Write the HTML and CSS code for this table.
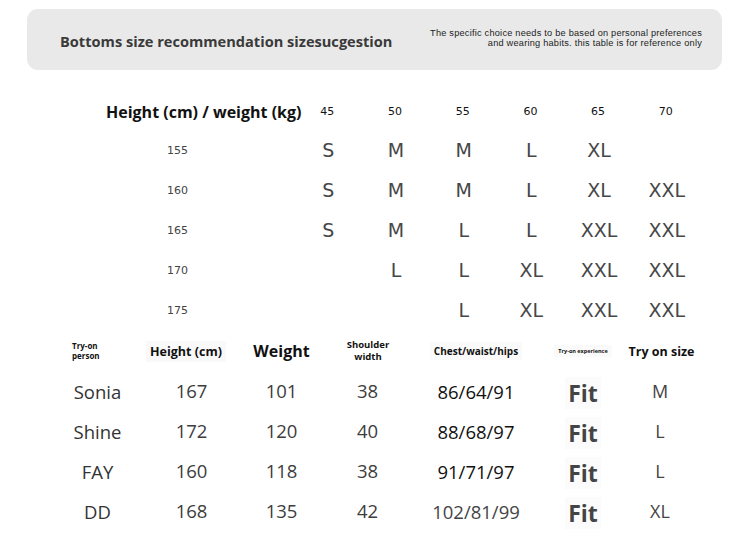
FILE: index.html
```html
<!DOCTYPE html>
<html>
<head>
<meta charset="utf-8">
<link rel="stylesheet" href="styles.css">
</head>
<body>
<div class="page">
  <header class="banner">
    <h1 class="banner-title">Bottoms size recommendation sizesucgestion</h1>
    <p class="banner-note"><span>The specific choice needs to be based on personal preferences</span><span>and wearing habits. this table is for reference only</span></p>
  </header>

  <section class="size-chart">
    <div class="corner">Height (cm) / weight (kg)</div>
    <div class="wt">45</div><div class="wt">50</div><div class="wt">55</div><div class="wt">60</div><div class="wt">65</div><div class="wt">70</div>

    <div class="ht">155</div>
    <div class="sz">S</div><div class="sz">M</div><div class="sz">M</div><div class="sz">L</div><div class="sz">XL</div><div class="sz"></div>

    <div class="ht">160</div>
    <div class="sz">S</div><div class="sz">M</div><div class="sz">M</div><div class="sz">L</div><div class="sz">XL</div><div class="sz">XXL</div>

    <div class="ht">165</div>
    <div class="sz">S</div><div class="sz">M</div><div class="sz">L</div><div class="sz">L</div><div class="sz">XXL</div><div class="sz">XXL</div>

    <div class="ht">170</div>
    <div class="sz"></div><div class="sz">L</div><div class="sz">L</div><div class="sz">XL</div><div class="sz">XXL</div><div class="sz">XXL</div>

    <div class="ht">175</div>
    <div class="sz"></div><div class="sz"></div><div class="sz">L</div><div class="sz">XL</div><div class="sz">XXL</div><div class="sz">XXL</div>
  </section>

  <section class="tryon">
    <div class="th th-person"><span>Try-on<br>person</span></div>
    <div class="th th-height"><span>Height (cm)</span></div>
    <div class="th th-weight"><span>Weight</span></div>
    <div class="th th-shoulder"><span>Shoulder<br>width</span></div>
    <div class="th th-chest"><span>Chest/waist/hips</span></div>
    <div class="th th-exp"><span>Try-on experience</span></div>
    <div class="th th-size"><span>Try on size</span></div>

    <div class="td name">Sonia</div><div class="td num">167</div><div class="td num">101</div><div class="td num">38</div><div class="td bust">86/64/91</div><div class="td fit"><span>Fit</span></div><div class="td size">M</div>
    <div class="td name">Shine</div><div class="td num">172</div><div class="td num">120</div><div class="td num">40</div><div class="td bust">88/68/97</div><div class="td fit"><span>Fit</span></div><div class="td size">L</div>
    <div class="td name">FAY</div><div class="td num">160</div><div class="td num">118</div><div class="td num">38</div><div class="td bust">91/71/97</div><div class="td fit"><span>Fit</span></div><div class="td size">L</div>
    <div class="td name">DD</div><div class="td num">168</div><div class="td num">135</div><div class="td num">42</div><div class="td bust grey">102/81/99</div><div class="td fit"><span>Fit</span></div><div class="td size">XL</div>
  </section>
</div>
</body>
</html>
```

FILE: styles.css
```css
* { box-sizing: border-box; }
html, body { margin: 0; padding: 0; background: #fff; }
body { font-family: "Open Sans", "Noto Sans", sans-serif; color: #333; }

.page { width: 750px; height: 535px; overflow: hidden; padding-top: 9px; }

.banner {
  margin-left: 27px;
  width: 695px;
  height: 61px;
  background: #e9e9e9;
  border-radius: 11px;
  display: flex;
  align-items: center;
  justify-content: space-between;
  padding: 0 20px 0 33px;
}
.banner-title {
  margin: 0;
  font-size: 14.6px;
  font-weight: 700;
  color: #3a3a3a;
  padding-top: 2px;
}
.banner-note {
  margin: 0;
  display: flex;
  flex-direction: column;
  align-items: flex-end;
  font-family: "Liberation Sans", sans-serif;
  font-size: 9.2px;
  letter-spacing: 0.23px;
  text-align: right;
  color: #222;
  padding-bottom: 4px;
}
.banner-note span { display: block; height: 10px; line-height: 10px; }

.size-chart {
  margin-top: 24px;
  margin-left: 106px;
  display: grid;
  grid-template-columns: 187.5px repeat(6, 67.7px);
  grid-template-rows: 36px repeat(5, 40px);
  align-items: center;
}
.corner {
  font-size: 16px;
  font-weight: 700;
  color: #111;
  white-space: nowrap;
  padding-bottom: 1px;
}
.wt {
  text-align: center;
  font-family: "DejaVu Sans", sans-serif;
  font-size: 11px;
  color: #111;
  padding-bottom: 2px;
}
.ht {
  font-family: "DejaVu Sans", sans-serif;
  font-size: 11px;
  color: #444;
  padding-left: 61px;
}
.sz {
  text-align: center;
  font-family: "DejaVu Sans", sans-serif;
  font-size: 19px;
  color: #474747;
  padding-left: 2px;
}

.tryon {
  margin-left: 50px;
  display: grid;
  grid-template-columns: 95px 93px 87px 85px 132px 82px 72px;
  grid-template-rows: 42px repeat(4, 40px);
  align-items: center;
}
.th { text-align: center; font-weight: 700; color: #111; }
.th span { display: inline-block; }
.th-person { text-align: left; padding-left: 22px; font-size: 8px; line-height: 10px; }
.th-height { font-size: 12.5px; padding-right: 11px; }
.th-height span { background: #f9f9f9; padding: 2px 4px; }
.th-weight { font-size: 16px; }
.th-shoulder { font-size: 9.5px; line-height: 12px; padding-left: 1px; }
.th-chest { font-size: 10px; }
.th-chest span { background: #fafafa; padding: 2px 4px; }
.th-exp { font-size: 5.5px; }
.th-exp span { background: #fafafa; padding: 2px 4px; }
.th-size { font-size: 12.5px; padding-left: 3px; }

.td { text-align: center; font-size: 18.5px; color: #333; }
.name { padding-bottom: 1px; }
.num { padding-bottom: 4px; color: #3d3d3d; }
.bust { color: #111; padding-bottom: 2px; }
.bust.grey { color: #444; }
.fit { font-size: 23px; font-weight: 700; color: #444; padding-top: 1px; }
.fit span { display: inline-block; background: #fbfbfb; padding: 0 3px; line-height: 32px; }
.size { color: #444; font-size: 18px; padding-bottom: 2px; }
```
